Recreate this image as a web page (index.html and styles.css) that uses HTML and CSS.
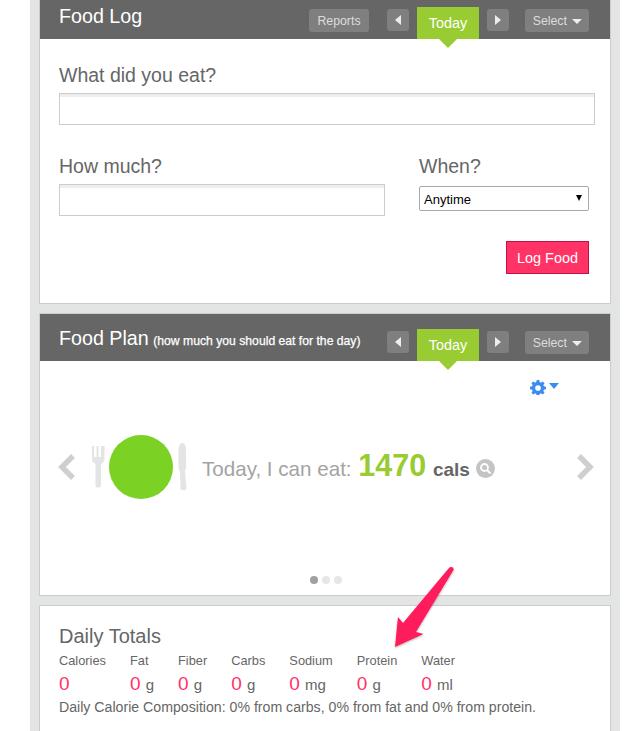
FILE: index.html
```html
<!DOCTYPE html>
<html>
<head>
	<title>Food Log</title>
	<meta charset="utf-8">
	<link rel="stylesheet" href="styles.css">
</head>
<body>
	<div class="column">

		<div class="panel">
			<div class="panel-head">
				<h2 class="panel-title">Food Log</h2>
				<div class="head-tools">
					<a class="tool tool-reports">Reports</a>
					<a class="tool tool-arrow"><span class="tri-left"></span></a>
					<a class="today">Today</a>
					<a class="tool tool-arrow"><span class="tri-right"></span></a>
					<a class="tool tool-select">Select <span class="tri-down"></span></a>
				</div>
			</div>
			<form class="log-form">
				<label class="field-label">What did you eat?</label>
				<input class="text-input text-input-wide" type="text">
				<div class="log-row">
					<div class="log-much">
						<label class="field-label">How much?</label>
						<input class="text-input text-input-much" type="text">
					</div>
					<div class="log-when">
						<label class="field-label">When?</label>
						<div class="select-wrap">
							<select class="when-select">
								<option>Anytime</option>
							</select>
						</div>
					</div>
				</div>
				<div class="log-submit">
					<button class="log-button" type="button">Log Food</button>
				</div>
			</form>
		</div>

		<div class="panel">
			<div class="panel-head">
				<h2 class="panel-title">Food Plan <small class="panel-sub">(how much you should eat for the day)</small></h2>
				<div class="head-tools">
					<a class="tool tool-arrow"><span class="tri-left"></span></a>
					<a class="today">Today</a>
					<a class="tool tool-arrow"><span class="tri-right"></span></a>
					<a class="tool tool-select">Select <span class="tri-down"></span></a>
				</div>
			</div>
			<div class="plan-body">
				<div class="plan-gear">
					<svg width="16" height="15" viewBox="0 0 16 16">
						<path fill="#3b8cf0" fill-rule="evenodd" d="M6.6 0h2.8l.4 2.2 1.3.6L13 1.500l2 2-1.300 1.900.6 1.300 2.200.4v2.800l-2.200.4-.6 1.300L15 13.500l-2 2-1.900-1.300-1.300.6-.4 2.200H6.600l-.4-2.200-1.300-.6L3 15.500l-2-2 1.300-1.900-.6-1.300L-.5 9.900V7.100l2.200-.4.6-1.300L1 3.500l2-2 1.900 1.300 1.300-.6zM8 5.500a3 3 0 1 0 0 6 3 3 0 0 0 0-6z"/>
					</svg>
					<span class="gear-caret"></span>
				</div>
				<div class="plan-slide">
					<svg class="chev" width="18" height="26" viewBox="0 0 18 26"><path d="M15 2 4 13l11 11" fill="none" stroke="#cfcfcf" stroke-width="5.500"/></svg>
					<svg class="fork" width="13" height="42" viewBox="0 0 13 42">
						<path fill="#e3e4e4" d="M0 0h2v11h2.500V0h2v11H9V0h2.500l1 0v13c0 3-2 4-3.500 5v21a2.500 2.500 0 0 1-5.500 0V18C2 17 0 16 0 13z"/>
					</svg>
					<div class="plate"></div>
					<svg class="knife" width="9" height="47" viewBox="0 0 9 47">
						<path fill="#e3e4e4" d="M4.500 0C7 0 8 3 8 8v16c0 2-1 3-1 5l1.500 15a3 3 0 0 1-6 1L2 29C1 27 .5 25 .5 22V8C.5 3 2 0 4.500 0z"/>
					</svg>
					<div class="plan-text">
						Today, I can eat:
						<span class="plan-cals">1470</span>
						<span class="plan-unit">cals</span>
					</div>
					<svg class="lens" width="19" height="19" viewBox="0 0 19 19">
						<circle cx="9.500" cy="9.500" r="9.500" fill="#c4c4c4"/>
						<circle cx="8.500" cy="8.500" r="3.500" fill="none" stroke="#fff" stroke-width="1.800"/>
						<path d="m11 11 3.500 3.500" stroke="#fff" stroke-width="2"/>
					</svg>
					<svg class="chev chev-right" width="18" height="26" viewBox="0 0 18 26"><path d="m3 2 11 11L3 24" fill="none" stroke="#cfcfcf" stroke-width="5.500"/></svg>
				</div>
				<div class="plan-dots">
					<span class="dot dot-on"></span>
					<span class="dot"></span>
					<span class="dot"></span>
				</div>
			</div>
		</div>

		<div class="panel">
			<div class="totals">
				<h3 class="totals-title">Daily Totals</h3>
				<div class="totals-row">
					<div class="total"><div class="total-name">Calories</div><div class="total-val"><b>0</b></div></div>
					<div class="total"><div class="total-name">Fat</div><div class="total-val"><b>0</b> g</div></div>
					<div class="total"><div class="total-name">Fiber</div><div class="total-val"><b>0</b> g</div></div>
					<div class="total"><div class="total-name">Carbs</div><div class="total-val"><b>0</b> g</div></div>
					<div class="total"><div class="total-name">Sodium</div><div class="total-val"><b>0</b> mg</div></div>
					<div class="total"><div class="total-name">Protein</div><div class="total-val"><b>0</b> g</div></div>
					<div class="total"><div class="total-name">Water</div><div class="total-val"><b>0</b> ml</div></div>
				</div>
				<p class="totals-note">Daily Calorie Composition: 0% from carbs, 0% from fat and 0% from protein.</p>
			</div>
		</div>
	</div>

	<!-- annotation drawn over the page -->
	<svg class="callout" width="70" height="90" viewBox="390 562 70 90">
		<defs>
			<filter id="soft" x="-20%" y="-20%" width="140%" height="140%">
				<feDropShadow dx="0" dy="1" stdDeviation="1" flood-color="#000" flood-opacity=".3"/>
			</filter>
		</defs>
		<path fill="#ff1a5c" filter="url(#soft)" d="M451 567q3 0 2.500 3L416 632l7.500 2-28.500 13 3-30 5 6 46-55q1-1 2-1z"/>
	</svg>
</body>
</html>
```

FILE: styles.css
```css
* {box-sizing: border-box;}

html, body {
	height: 731px;
	overflow: hidden;
}

body {
	margin: 0;
	background: #fff;
	color: #666;
	font-family: "Liberation Sans", Arial, sans-serif;
	position: relative;
}

.column {
	width: 590px;
	height: 740px;
	margin: -9px 0 0 30px;
	padding: 0 9px;
	background: #e3e4e4;
	display: flex;
	flex-direction: column;
	gap: 9px;
}

.panel {
	background: #fff;
	border: 1px solid #ccc;
}

/* header bar */
.panel-head {
	height: 47px;
	padding: 15px 21px 0 19px;
	background: #666;
	display: flex;
	justify-content: space-between;
	align-items: flex-start;
}

.panel-title {
	margin: -6px 0 0;
	font-size: 19.700px;
	font-weight: normal;
	line-height: 30px;
	color: #fff;
}

.panel-sub {
	margin-left: -1px;
	font-size: 12.200px;
	color: #fff;
	-webkit-text-stroke: .25px #fff;
}

.head-tools {
	display: flex;
	align-items: flex-start;
}

.tool {
	margin-top: 2px;
	height: 23px;
	line-height: 24px;
	background: #7f7f7f;
	border-radius: 3px;
	color: #ddd;
	font-size: 12.300px;
	text-align: center;
}

.tool-reports {
	width: 60px;
	margin-right: 18px;
}

.tool-arrow {
	width: 22px;
	height: 22px;
	display: flex;
	align-items: center;
	justify-content: center;
}

.tool-select {
	width: 64px;
	margin-left: 16px;
	padding-left: 1px;
}

.tri-left, .tri-right, .tri-down {
	display: inline-block;
	width: 0;
	height: 0;
	border-style: solid;
	border-color: transparent;
}

.tri-left {
	border-width: 5px 6px 5px 0;
	border-right-color: #eee;
}

.tri-right {
	border-width: 5px 0 5px 6px;
	border-left-color: #eee;
}

.tri-down {
	margin-left: 2px;
	vertical-align: 1px;
	border-width: 5px 5px 0;
	border-top-color: #eee;
}

.today {
	position: relative;
	width: 62px;
	height: 32px;
	margin: 0 8px;
	background: #99cc33;
	color: #fff;
	font-size: 14.400px;
	line-height: 32px;
	text-align: center;
}

.today:after {
	content: "";
	position: absolute;
	left: 22px;
	top: 32px;
	border-style: solid;
	border-width: 9px 9px 0;
	border-color: #99cc33 transparent transparent;
}

/* log form */
.log-form {
	padding: 24px 15px 29px 19px;
}

.field-label {
	display: block;
	font-size: 19.500px;
	line-height: 24px;
}

.text-input {
	display: block;
	height: 32px;
	margin-top: 6px;
	border: 1px solid #ccc;
	box-shadow: inset 0 3px 0 #eee;
	outline: none;
	background: #fff;
}

.text-input-wide {
	width: 536px;
}

.text-input-much {
	width: 326px;
}

.log-row {
	margin-top: 29px;
	display: flex;
}

.log-much {
	width: 360px;
}

.log-when {
	width: 170px;
}

.select-wrap {
	position: relative;
	margin-top: 8px;
}

.select-wrap:after {
	content: "";
	position: absolute;
	right: 7px;
	top: 9px;
	border-style: solid;
	border-width: 6px 3.500px 0;
	border-color: #000 transparent transparent;
}

.when-select {
	display: block;
	width: 170px;
	height: 25px;
	padding: 1px 4px 0;
	appearance: none;
	background: #fff;
	border: 1px solid #a9a9a9;
	border-radius: 2px;
	color: #000;
	font-family: "Liberation Sans", Arial, sans-serif;
	font-size: 13px;
}

.log-submit {
	margin-top: 25px;
	width: 530px;
	display: flex;
	justify-content: flex-end;
}

.log-button {
	width: 83px;
	height: 33px;
	padding: 0;
	background: #ff3366;
	border: 1px solid #c2124c;
	color: #fff;
	font-family: "Liberation Sans", Arial, sans-serif;
	font-size: 14.400px;
}

/* food plan */
.plan-body {
	height: 234px;
	padding: 19px 16px 0 18px;
}

.plan-gear {
	height: 15px;
	padding-right: 35px;
	display: flex;
	justify-content: flex-end;
	align-items: center;
	gap: 3px;
}

.gear-caret {
	border-style: solid;
	border-width: 6px 5px 0;
	border-color: #3b8cf0 transparent transparent;
	margin-top: -3px;
}

.plan-slide {
	height: 47px;
	margin-top: 48px;
	display: flex;
	align-items: center;
}

.fork {
	margin: 0 0 0 16px;
}

.plate {
	width: 64px;
	height: 64px;
	flex: none;
	margin: 0 5px 0 4px;
	border-radius: 50%;
	background: #7bd124;
}

.plan-text {
	margin: -3px 0 0 15px;
	font-size: 20.600px;
	color: #a3a3a3;
	white-space: nowrap;
}

.plan-cals {
	margin-left: 1px;
	font-size: 30.500px;
	font-weight: bold;
	color: #99cc33;
}

.plan-unit {
	margin-left: 1px;
	font-size: 19px;
	font-weight: bold;
	color: #666;
}

.lens {
	margin: 3px 0 0 6px;
}

.chev-right {
	margin-left: auto;
}

.plan-dots {
	margin-top: 86px;
	padding-left: 252px;
	display: flex;
	gap: 4px;
}

.dot {
	width: 8px;
	height: 8px;
	border-radius: 50%;
	background: #e6e6e6;
}

.dot-on {
	background: #a0a0a0;
}

/* daily totals */
.totals {
	padding: 18px 19px 40px;
}

.totals-title {
	margin: 0;
	font-size: 20px;
	font-weight: normal;
	line-height: 24px;
}

.totals-row {
	margin-top: 5px;
	display: flex;
	gap: 24px;
}

.total-name {
	font-size: 12.800px;
	line-height: 16px;
}

.total-val {
	margin-top: 4px;
	font-size: 15px;
	line-height: 22px;
}

.total-val b {
	font-size: 19px;
	font-weight: normal;
	color: #ff3366;
	margin-right: 1px;
}

.totals-note {
	margin: 2px 0 0;
	font-size: 14.150px;
	line-height: 18px;
}

.callout {
	position: absolute;
	left: 390px;
	top: 562px;
}
```
